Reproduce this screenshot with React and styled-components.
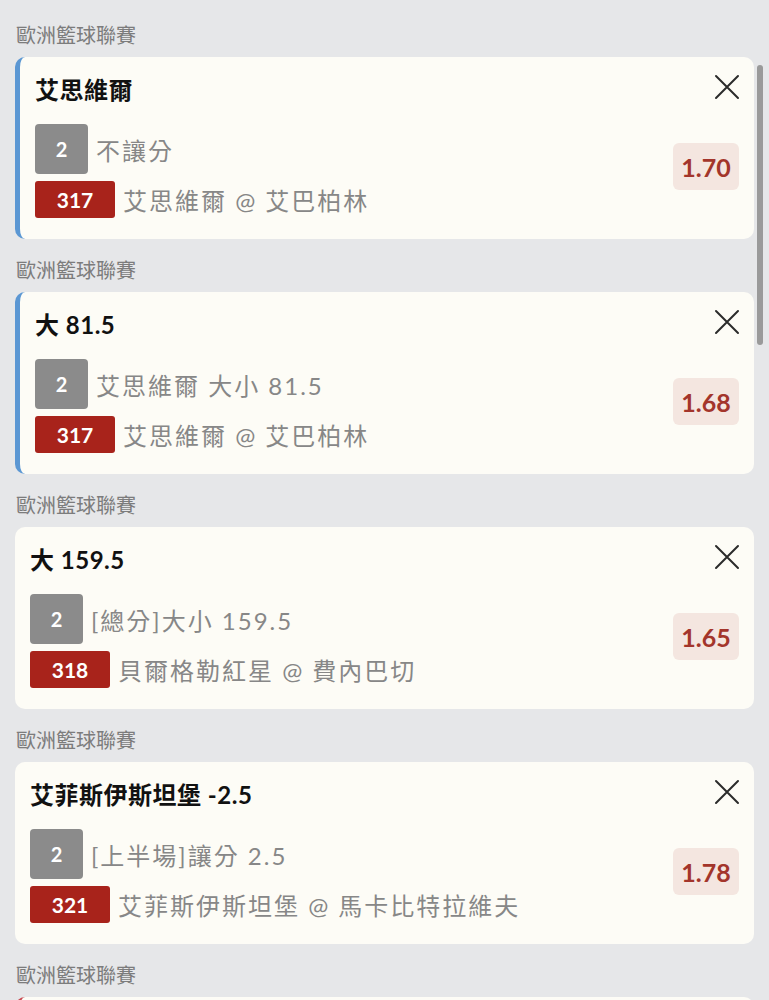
import React from "react";
import styled, {createGlobalStyle} from "styled-components";

const bets = [
    {
        league: "歐洲籃球聯賽",
        title: "艾思維爾",
        market: "不讓分",
        code: "317",
        match: "艾思維爾 @ 艾巴柏林",
        odds: "1.70",
        accent: "#5b97d3",
    },
    {
        league: "歐洲籃球聯賽",
        title: "大 81.5",
        market: "艾思維爾 大小 81.5",
        code: "317",
        match: "艾思維爾 @ 艾巴柏林",
        odds: "1.68",
        accent: "#5b97d3",
    },
    {
        league: "歐洲籃球聯賽",
        title: "大 159.5",
        market: "[總分]大小 159.5",
        code: "318",
        match: "貝爾格勒紅星 @ 費內巴切",
        odds: "1.65",
    },
    {
        league: "歐洲籃球聯賽",
        title: "艾菲斯伊斯坦堡 -2.5",
        market: "[上半場]讓分 2.5",
        code: "321",
        match: "艾菲斯伊斯坦堡 @ 馬卡比特拉維夫",
        odds: "1.78",
    },
];

function CloseIcon() {
    return (
        <svg width="30" height="30" viewBox="0 0 30 30" fill="none">
            <path d="M4 4L26 26M26 4L4 26" stroke="#2b2b2b" strokeWidth="2" strokeLinecap="round"/>
        </svg>
    );
}

function BetCard({bet}) {
    return (
        <>
            <League>{bet.league}</League>
            <Card $accent={bet.accent}>
                <Header>
                    <Title>{bet.title}</Title>
                    <CloseButton>
                        <CloseIcon/>
                    </CloseButton>
                </Header>
                <Body>
                    <Lines>
                        <Line>
                            <CountBadge>2</CountBadge>
                            <LineText>{bet.market}</LineText>
                        </Line>
                        <Line>
                            <CodeBadge>{bet.code}</CodeBadge>
                            <LineText>{bet.match}</LineText>
                        </Line>
                    </Lines>
                    <Odds>{bet.odds}</Odds>
                </Body>
            </Card>
        </>
    );
}

const App = () => {
    return (
        <>
            <GlobalStyle/>
            <Page>
                {bets.map((bet, i) => (
                    <BetCard key={i} bet={bet}/>
                ))}
                {/* следующая карточка, видна только верхняя кромка */}
                <League>歐洲籃球聯賽</League>
                <Card $accent="#c9474f"/>
            </Page>
            <ScrollThumb/>
        </>
    );
};

export default App;

// Стили
const GlobalStyle = createGlobalStyle`
    html, body {
        margin: 0;
        padding: 0;
        overflow: hidden;
        background: #e6e7e9;
    }

    body {
        font-family: Lato, "Noto Sans CJK TC", sans-serif;
    }
`;

const Page = styled.div`
    padding: 4px 15px 0;
    height: 1000px;
    box-sizing: border-box;
`;

const League = styled.div`
    padding: 19px 0 10px 1px;
    line-height: 24px;
    font-size: 20px;
    color: #7c7c7c;
`;

const Card = styled.div`
    background: #fdfcf6;
    border-radius: 10px;
    border-left: ${(p) => (p.$accent ? `5px solid ${p.$accent}` : "none")};
    padding: 18px 15px 21px;
    height: 182px;
    box-sizing: border-box;
`;

const Header = styled.div`
    display: flex;
    align-items: center;
    justify-content: space-between;
    height: 30px;
`;

const Title = styled.div`
    font-size: 24px;
    font-weight: 700;
    line-height: 30px;
    color: #111;
    letter-spacing: 0.5px;
`;

const CloseButton = styled.div`
    display: flex;
    margin-top: -6px;
    margin-right: -3px;
`;

const Body = styled.div`
    display: flex;
    align-items: center;
    justify-content: space-between;
    margin-top: 19px;
`;

const Lines = styled.div`
    display: flex;
    flex-direction: column;
    gap: 7px;
`;

const Line = styled.div`
    display: flex;
    align-items: center;
    gap: 8px;
`;

const CountBadge = styled.div`
    width: 53px;
    height: 50px;
    border-radius: 4px;
    background: #8b8b8b;
    color: #fff;
    font-size: 20px;
    font-weight: 700;
    display: flex;
    align-items: center;
    justify-content: center;
`;

const CodeBadge = styled.div`
    width: 80px;
    height: 37px;
    border-radius: 3px;
    background: #a8231b;
    color: #fff;
    font-size: 21px;
    font-weight: 700;
    display: flex;
    align-items: center;
    justify-content: center;
`;

const LineText = styled.div`
    font-size: 24px;
    color: #878787;
    letter-spacing: 2px;
    white-space: nowrap;
`;

const Odds = styled.div`
    width: 66px;
    height: 47px;
    margin-bottom: 9px;
    border-radius: 6px;
    background: #f4e6e0;
    color: #a3352b;
    font-size: 25px;
    font-weight: 700;
    display: flex;
    align-items: center;
    justify-content: center;
`;

const ScrollThumb = styled.div`
    position: fixed;
    top: 65px;
    right: 6px;
    width: 6px;
    height: 280px;
    border-radius: 3px;
    background: #9a9a9a;
`;
